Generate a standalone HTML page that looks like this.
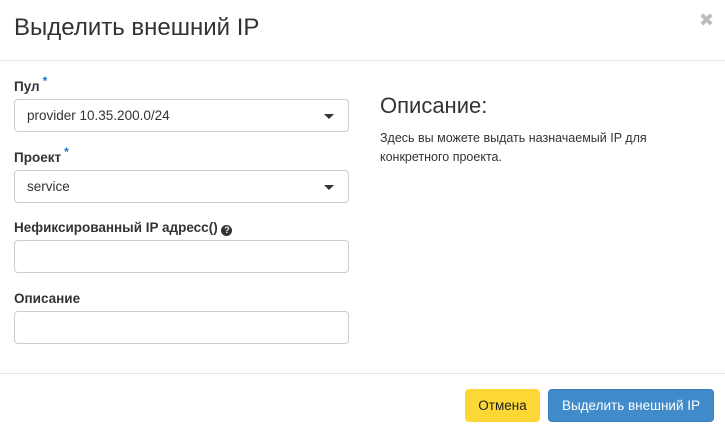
<!DOCTYPE html>
<html><head><meta charset="utf-8"><style>
*{box-sizing:border-box;margin:0;padding:0}
body{width:725px;height:433px;background:#fff;font-family:"Liberation Sans","DejaVu Sans",sans-serif;color:#333;position:relative;overflow:hidden}
.abs{position:absolute}
h1{position:absolute;left:14px;top:14px;font-size:24px;font-weight:normal;color:#333;white-space:nowrap}
.close{position:absolute;left:699px;top:10px;font-size:18px;color:#bbb;font-weight:bold}
.sep{position:absolute;left:0;width:725px;height:1px;background:#e5e5e5}
label{position:absolute;left:14px;font-size:13.5px;font-weight:bold;color:#333;white-space:nowrap}
.req{color:#1a73d0;font-size:12px;vertical-align:top;position:relative;top:-5px;margin-left:3px}
.inp{position:absolute;left:14px;width:335px;height:33px;border:1px solid #ccc;border-radius:4px;font-size:13.5px;padding:8px 12px;color:#333}
.caret{position:absolute;right:14px;top:14px;width:0;height:0;border-left:5px solid transparent;border-right:5px solid transparent;border-top:5px solid #333}
.btn{position:absolute;top:389px;height:33px;border-radius:4px;font-size:13.5px;text-align:center;line-height:33px}
</style></head><body>
<h1>Выделить внешний IP</h1>
<div class="close">✖</div>
<div class="sep" style="top:60px"></div>
<label style="top:79px">Пул<span class="req">*</span></label>
<div class="inp" style="top:99px">provider 10.35.200.0/24<div class="caret"></div></div>
<label style="top:150px">Проект<span class="req">*</span></label>
<div class="inp" style="top:170px">service<div class="caret"></div></div>
<label style="top:220px">Нефиксированный IP адресс() <span style="display:inline-block;width:11px;height:11px;border-radius:50%;background:#333;color:#fff;font-size:9px;text-align:center;line-height:11px;vertical-align:-1px">?</span></label>
<div class="inp" style="top:240px"></div>
<label style="top:291px">Описание</label>
<div class="inp" style="top:311px"></div>
<div class="abs" style="left:380px;top:93px;font-size:22px;color:#333">Описание:</div>
<div class="abs" style="left:380px;top:129px;font-size:12.5px;line-height:19px;color:#333;width:318px">Здесь вы можете выдать назначаемый IP для конкретного проекта.</div>
<div class="sep" style="top:373px"></div>
<div class="btn" style="left:465px;width:75px;background:#fdd835;color:#222">Отмена</div>
<div class="btn" style="left:548px;width:166px;background:#428bca;border:1px solid #3a7cb8;color:#fff;line-height:31px">Выделить внешний IP</div>
</body></html>
